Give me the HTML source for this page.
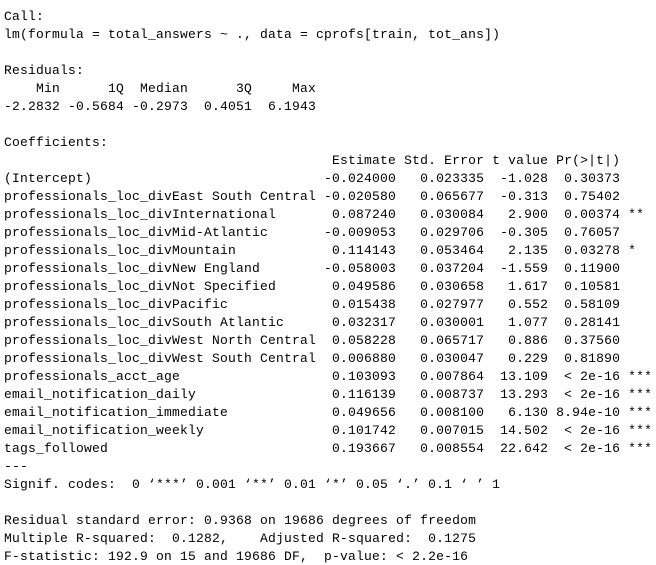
<!DOCTYPE html>
<html><head><meta charset="utf-8"><style>
html,body{margin:0;padding:0;background:#fff;width:656px;height:565px;overflow:hidden}
pre{margin:0;padding:8px 0 0 4px;font-family:"Liberation Mono",monospace;font-size:13px;line-height:18px;color:#000;letter-spacing:0.2px}
</style></head><body><pre>Call:
lm(formula = total_answers ~ ., data = cprofs[train, tot_ans])

Residuals:
    Min      1Q  Median      3Q     Max 
-2.2832 -0.5684 -0.2973  0.4051  6.1943 

Coefficients:
                                         Estimate Std. Error t value Pr(&gt;|t|)    
(Intercept)                             -0.024000   0.023335  -1.028  0.30373    
professionals_loc_divEast South Central -0.020580   0.065677  -0.313  0.75402    
professionals_loc_divInternational       0.087240   0.030084   2.900  0.00374 ** 
professionals_loc_divMid-Atlantic       -0.009053   0.029706  -0.305  0.76057    
professionals_loc_divMountain            0.114143   0.053464   2.135  0.03278 *  
professionals_loc_divNew England        -0.058003   0.037204  -1.559  0.11900    
professionals_loc_divNot Specified       0.049586   0.030658   1.617  0.10581    
professionals_loc_divPacific             0.015438   0.027977   0.552  0.58109    
professionals_loc_divSouth Atlantic      0.032317   0.030001   1.077  0.28141    
professionals_loc_divWest North Central  0.058228   0.065717   0.886  0.37560    
professionals_loc_divWest South Central  0.006880   0.030047   0.229  0.81890    
professionals_acct_age                   0.103093   0.007864  13.109  &lt; 2e-16 ***
email_notification_daily                 0.116139   0.008737  13.293  &lt; 2e-16 ***
email_notification_immediate             0.049656   0.008100   6.130 8.94e-10 ***
email_notification_weekly                0.101742   0.007015  14.502  &lt; 2e-16 ***
tags_followed                            0.193667   0.008554  22.642  &lt; 2e-16 ***
---
Signif. codes:  0 ‘***’ 0.001 ‘**’ 0.01 ‘*’ 0.05 ‘.’ 0.1 ‘ ’ 1

Residual standard error: 0.9368 on 19686 degrees of freedom
Multiple R-squared:  0.1282,	Adjusted R-squared:  0.1275 
F-statistic: 192.9 on 15 and 19686 DF,  p-value: &lt; 2.2e-16
</pre></body></html>
